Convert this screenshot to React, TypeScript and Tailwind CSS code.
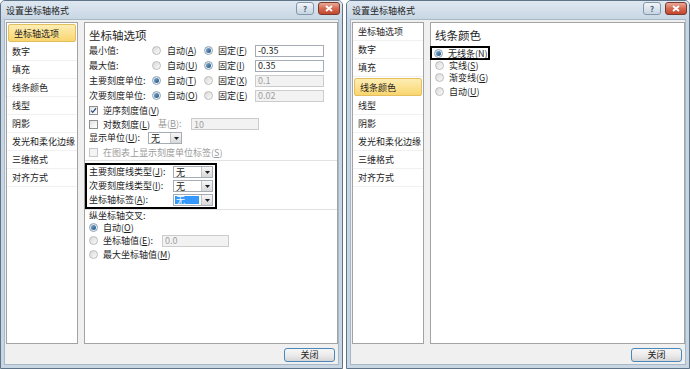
import React from "react";

const ink = "text-[#1e1e1e]";
const dimInk = "text-[#9a9a9a]";

function K({ t, k, suffix = "" }: { t: string; k: string; suffix?: string }) {
  return (
    <span className="whitespace-nowrap leading-none">
      {t}(<span className="underline underline-offset-1">{k}</span>){suffix}
    </span>
  );
}

function Radio({ on }: { on?: boolean }) {
  return (
    <span
      className={`flex h-[9px] w-[9px] shrink-0 items-center justify-center rounded-full border ${
        on ? "border-[#8aa3bb]" : "border-[#bcbcbc]"
      } bg-gradient-to-br from-[#d9d9d9] to-[#fbfbfb]`}
    >
      {on && <span className="h-[5px] w-[5px] rounded-full bg-gradient-to-br from-[#7fb0d8] to-[#1f4f7c]" />}
    </span>
  );
}

function Check({ on, dim }: { on?: boolean; dim?: boolean }) {
  return (
    <span
      className={`flex h-[9px] w-[9px] shrink-0 items-center justify-center border ${
        dim ? "border-[#c8c8c8] bg-[#f4f4f4]" : "border-[#8e8f8f] bg-gradient-to-br from-[#e2e2e2] to-white"
      }`}
    >
      {on && (
        <svg viewBox="0 0 9 9" className="h-[7px] w-[7px]">
          <path d="M1.3 4.6 L3.5 6.8 L7.8 1.6" stroke="#2b4f7e" strokeWidth="1.6" fill="none" />
        </svg>
      )}
    </span>
  );
}

function Field({ v, dim, w }: { v: string; dim?: boolean; w: string }) {
  return (
    <span
      className={`flex h-[12px] ${w} shrink-0 items-center border pl-[2px] leading-none ${
        dim ? "border-[#cccccc] bg-[#f2f2f2] text-[#a0a0a0]" : "border-[#a5acb5] bg-white text-[#1e1e1e]"
      }`}
    >
      {v}
    </span>
  );
}

function Combo({ w, hi }: { w: string; hi?: boolean }) {
  return (
    <span className={`flex h-[12px] ${w} shrink-0 items-stretch border border-[#a5acb5] bg-white`}>
      <span className="flex flex-1 items-center pl-[1px] py-[1px]">
        <span className={`flex h-full items-center leading-none pl-[1px] ${hi ? "w-[24px] bg-[#3399ff] text-white" : ""}`}>
          无
        </span>
      </span>
      <span className="flex w-[11px] items-center justify-center border-l border-[#c4c4c4] bg-gradient-to-b from-[#f7f7f7] to-[#d8d8d8]">
        <svg viewBox="0 0 5 3" className="h-[3px] w-[5px]">
          <path d="M0 0h5L2.5 3z" fill="#1e1e1e" />
        </svg>
      </span>
    </span>
  );
}

const navItems = ["坐标轴选项", "数字", "填充", "线条颜色", "线型", "阴影", "发光和柔化边缘", "三维格式", "对齐方式"];

function Dialog({ active, w, children }: { active: number; w: string; children: React.ReactNode }) {
  return (
    <div className={`flex h-[369px] ${w} shrink-0 flex-col rounded-t-[5px] border border-[#5f7389] bg-[#c8d6e4]`}>
      {/* title bar */}
      <div className="flex h-[18px] shrink-0 items-start rounded-t-[4px] bg-gradient-to-b from-[#dfe8f1] to-[#c8d6e4] px-[2px]">
        <span className={`mt-[5px] pl-[3px] leading-none ${ink}`}>设置坐标轴格式</span>
        <div className="ml-auto mt-[1px] flex gap-[4px]">
          <span className="flex h-[13px] w-[18px] items-center justify-center rounded-[3px] border border-[#8397ab] bg-gradient-to-b from-[#f1f5f9] to-[#c7d4e1] text-[8px] leading-none font-bold text-[#4d6075]">
            ?
          </span>
          <span className="flex h-[13px] w-[22px] items-center justify-center rounded-[3px] border border-[#7a3a2e] bg-gradient-to-b from-[#e9a999] via-[#d46a52] to-[#c2452b]">
            <svg viewBox="0 0 8 7" className="h-[7px] w-[8px]">
              <path d="M1 1L7 6M7 1L1 6" stroke="white" strokeWidth="1.8" />
            </svg>
          </span>
        </div>
      </div>
      {/* client area */}
      <div className="mx-[3px] mb-[3px] flex flex-1 flex-col border border-[#a9b8c7] bg-[#f0f0f0] pl-[1px] pt-[2px]">
        <div className="flex flex-1 gap-[6px]">
          <div className="flex w-[72px] shrink-0 flex-col border border-[#a3a3a3] bg-white">
            {navItems.map((n, i) => (
              <div
                key={n}
                className={`flex h-[18px] shrink-0 items-center whitespace-nowrap pl-[5px] leading-none ${ink} ${
                  i === active
                    ? "mx-[1px] my-[1px] h-[16px] rounded-[2px] border border-[#e3bf5e] bg-gradient-to-b from-[#fdeeb3] to-[#f9d56e] pl-[4px]"
                    : "border-b border-[#f1f1f1]"
                }`}
              >
                {n}
              </div>
            ))}
          </div>
          <div className="flex flex-1 flex-col border border-[#a3a3a3] bg-white pl-[4px] pt-[4px]">{children}</div>
        </div>
        <div className="flex h-[20px] shrink-0 items-center justify-end pr-[3px] pt-[1px]">
          <span
            className={`flex h-[14px] w-[51px] items-center justify-center rounded-[3px] border border-[#4a88bb] bg-gradient-to-b from-[#f6f6f6] via-[#ececec] to-[#d6d6d6] leading-none ${ink}`}
          >
            关闭
          </span>
        </div>
      </div>
    </div>
  );
}

function AxisPanel() {
  const radioRow = (
    label: string,
    first: boolean,
    k1: string,
    k2: string,
    v: string,
  ) => (
    <div className="flex h-[15px] shrink-0 items-center">
      <span className="w-[63px] shrink-0 whitespace-nowrap leading-none">{label}</span>
      <span className="flex w-[52px] shrink-0 items-center gap-[6px]">
        <Radio on={!first} />
        <K t="自动" k={k1} />
      </span>
      <span className="flex w-[51px] shrink-0 items-center gap-[5px]">
        <Radio on={first} />
        <K t="固定" k={k2} />
      </span>
      <Field v={v} dim={!first} w="w-[69px]" />
    </div>
  );

  return (
    <>
      <div className={`h-[16px] shrink-0 text-[11.5px] leading-[16px] ${ink}`}>坐标轴选项</div>
      {radioRow("最小值:", true, "A", "F", "-0.35")}
      {radioRow("最大值:", true, "U", "I", "0.35")}
      {radioRow("主要刻度单位:", false, "T", "X", "0.1")}
      {radioRow("次要刻度单位:", false, "O", "E", "0.02")}
      <div className="flex h-[14px] shrink-0 items-center gap-[5px]">
        <Check on />
        <K t="逆序刻度值" k="V" />
      </div>
      <div className="flex h-[14px] shrink-0 items-center">
        <span className="flex w-[69px] shrink-0 items-center gap-[5px]">
          <Check />
          <K t="对数刻度" k="L" />
        </span>
        <span className={`w-[33px] shrink-0 ${dimInk}`}>
          <K t="基" k="B" suffix=":" />
        </span>
        <Field v="10" dim w="w-[68px]" />
      </div>
      <div className="flex h-[14px] shrink-0 items-center">
        <span className="w-[59px] shrink-0">
          <K t="显示单位" k="U" suffix=":" />
        </span>
        <Combo w="w-[34px]" />
      </div>
      <div className={`flex h-[14px] shrink-0 items-center gap-[5px] ${dimInk}`}>
        <Check dim />
        <K t="在图表上显示刻度单位标签" k="S" />
      </div>
      <div className="-ml-[4px] mt-[1px] h-px shrink-0 bg-[#e2e2e2]" />
      <div className="-ml-[4px] mt-[2px] flex w-[132px] shrink-0 flex-col border-2 border-black pl-[2px]">
        {[
          ["主要刻度线类型", "J", false],
          ["次要刻度线类型", "I", false],
          ["坐标轴标签", "A", true],
        ].map(([t, k, hi]) => (
          <div key={t as string} className="flex h-[14px] items-center">
            <span className="w-[84px] shrink-0">
              <K t={t as string} k={k as string} suffix=":" />
            </span>
            <Combo w="w-[40px]" hi={hi as boolean} />
          </div>
        ))}
      </div>
      <div className="-ml-[4px] h-px shrink-0 bg-[#e2e2e2]" />
      <div className="flex h-[11px] shrink-0 items-center leading-none">纵坐标轴交叉:</div>
      <div className="flex h-[12px] shrink-0 items-center gap-[5px]">
        <Radio on />
        <K t="自动" k="O" />
      </div>
      <div className="flex h-[15px] shrink-0 items-center">
        <span className="flex w-[73px] shrink-0 items-center gap-[5px]">
          <Radio />
          <K t="坐标轴值" k="E" suffix=":" />
        </span>
        <Field v="0.0" dim w="w-[67px]" />
      </div>
      <div className="flex h-[13px] shrink-0 items-center gap-[5px]">
        <Radio />
        <K t="最大坐标轴值" k="M" />
      </div>
    </>
  );
}

function LinePanel() {
  return (
    <>
      <div className={`h-[16px] shrink-0 text-[11.5px] leading-[16px] ${ink}`}>线条颜色</div>
      <div className="-ml-[5px] mt-[3px] flex h-[14px] w-[60px] shrink-0 items-center gap-[5px] border-2 border-black pl-[2px]">
        <Radio on />
        <K t="无线条" k="N" />
      </div>
      <div className="flex h-[10px] shrink-0 items-center gap-[5px]">
        <Radio />
        <K t="实线" k="S" />
      </div>
      <div className="flex h-[14px] shrink-0 items-center gap-[5px]">
        <Radio />
        <K t="渐变线" k="G" />
      </div>
      <div className="flex h-[14px] shrink-0 items-center gap-[5px]">
        <Radio />
        <K t="自动" k="U" />
      </div>
    </>
  );
}

export default function App() {
  return (
    <div
      className={`flex h-[369px] w-[690px] gap-[3px] overflow-hidden bg-white font-['Noto_Sans_CJK_SC','Noto_Sans',sans-serif] text-[9px] ${ink}`}
    >
      <Dialog active={0} w="w-[343px]">
        <AxisPanel />
      </Dialog>
      <Dialog active={3} w="w-[344px]">
        <LinePanel />
      </Dialog>
    </div>
  );
}
